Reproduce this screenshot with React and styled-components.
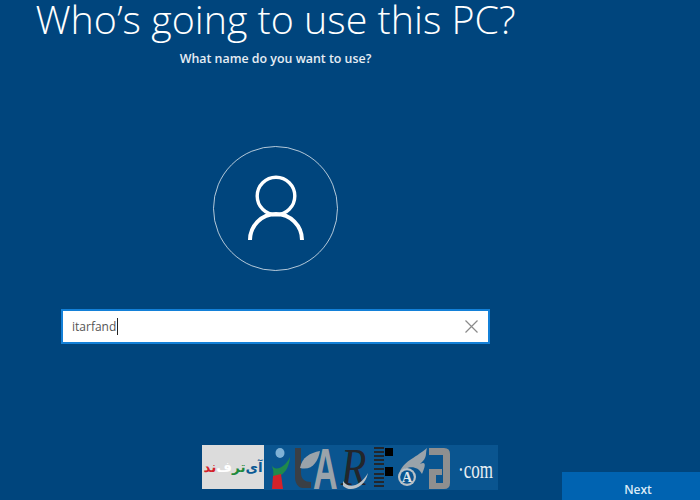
import styled, { createGlobalStyle } from 'styled-components';

const GlobalStyle = createGlobalStyle`
  html, body {
    margin: 0;
    padding: 0;
    background: #00457d;
  }
`;

const Page = styled.div`
  width: 700px;
  height: 500px;
  overflow: hidden;
  display: flex;
  flex-direction: column;
  background: #00457d;
  color: #fff;
  font-family: "Open Sans", "Noto Sans", sans-serif;
`;

const Main = styled.main`
  width: 551px;
  display: flex;
  flex-direction: column;
  align-items: center;
`;

const Title = styled.h1`
  margin: 0;
  height: 50px;
  font-size: 39.4px;
  line-height: 39px;
  font-weight: 300;
  white-space: nowrap;
  color: #fff;
`;

const Subtitle = styled.p`
  margin: 0;
  height: 18px;
  font-size: 12.4px;
  line-height: 18px;
  font-weight: 600;
  color: #e6edf4;
`;

const Avatar = styled.div`
  box-sizing: border-box;
  width: 125px;
  height: 125px;
  margin-top: 78px;
  border-radius: 50%;
  border: 1px solid rgba(255, 255, 255, 0.7);
  display: flex;
  align-items: center;
  justify-content: center;
`;

const NameField = styled.div`
  box-sizing: border-box;
  width: 429px;
  height: 35px;
  margin-top: 38px;
  padding: 0 10px 0 9px;
  display: flex;
  align-items: center;
  background: #fff;
  border: 2px solid #1380d8;
`;

const NameValue = styled.span`
  font-size: 12px;
  color: #555;
`;

const Caret = styled.span`
  width: 1px;
  height: 17px;
  margin-left: 1px;
  background: #222;
`;

const ClearIcon = styled.svg`
  margin-left: auto;
  display: block;
`;

const Footer = styled.footer`
  margin-top: auto;
  display: flex;
  align-items: flex-end;
  justify-content: space-between;
  padding-left: 202px;
`;

const Banner = styled.div`
  width: 296px;
  height: 45px;
  margin-bottom: 10px;
  display: flex;
`;

const BannerLabel = styled.div`
  width: 62px;
  height: 44px;
  display: flex;
  align-items: center;
  justify-content: center;
  background: #dcdcdc;
  direction: rtl;
  font-family: "DejaVu Sans", sans-serif;
  font-size: 13.5px;
  font-weight: 700;
  white-space: nowrap;
`;

const Tint = styled.span`
  color: ${(p) => p.$color};
`;

const BannerMarks = styled.svg`
  display: block;
  flex: 1;
`;

const NextButton = styled.button`
  width: 138px;
  height: 28px;
  padding: 8px 0 0 14px;
  border: none;
  background: #0063b1;
  color: #dcebf7;
  font-family: "Open Sans", "Noto Sans", sans-serif;
  font-size: 12px;
  font-weight: 600;
  line-height: 20px;
`;

export default function App() {
  return (
    <Page>
      <GlobalStyle />
      <Main>
        <Title>Who’s going to use this PC?</Title>
        <Subtitle>What name do you want to use?</Subtitle>
        <Avatar>
          <svg width="62" height="72" viewBox="0 0 62 72" fill="none" stroke="#fff">
            <circle cx="31" cy="23" r="18.8" strokeWidth="3.4" />
            <path d="M5 67 A26 26 0 0 1 57 67" strokeWidth="4" />
          </svg>
        </Avatar>
        <NameField>
          <NameValue>itarfand</NameValue>
          <Caret />
          <ClearIcon width="13" height="13" viewBox="0 0 13 13" stroke="#8a8a8a" strokeWidth="1.2">
            <path d="M0.5 0.5 L12.5 12.5 M12.5 0.5 L0.5 12.5" />
          </ClearIcon>
        </NameField>
      </Main>
      <Footer>
        <Banner>
          <BannerLabel>
            <Tint $color="#0b5a94">آی </Tint>
            <Tint $color="#1f8a3c">تر</Tint>
            <Tint $color="#ffffff">ف</Tint>
            <Tint $color="#d3222a">ند</Tint>
          </BannerLabel>
          <BannerMarks width="234" height="45" viewBox="0 0 234 45">
            <rect width="234" height="45" fill="#0a5590" />
            {/* person mark */}
            <ellipse cx="16" cy="8" rx="4.5" ry="5" fill="#7fb2d6" />
            <path d="M7 19 C10 27 20 24 26 12 C25 24 20 28 16 31 L9 31 C10 27 9 23 7 19 Z" fill="#1f8a4c" />
            <path d="M9 31 L17 29 L19 44 L8 44 Z" fill="#d3222a" />
            {/* leaf mark */}
            <path d="M31 3 L37 3 L37 28 C37 34 41 37 47 37 L47 43 L39 43 C34 43 31 38 31 32 Z" fill="#3a3f45" />
            <path d="M36 23 C38 12 46 8 56 6 C54 17 48 26 36 23 Z" fill="#9aa3aa" />
            <text transform="translate(49 44) scale(0.6 1)" fontFamily="Liberation Sans, sans-serif" fontSize="57" fontWeight="700" fill="#9aa3aa">A</text>
            <text transform="translate(77 40) scale(0.8 1)" fontFamily="Liberation Serif, serif" fontStyle="italic" fontSize="52" fill="#23262b">R</text>
            <path d="M79 36 C84 44 96 42 104 28 C101 43 86 48 79 41 Z" fill="#b8c0c6" />
            {/* barcode mark */}
            <path d="M110 3 H120 M110 7 H120 M110 11 H120 M110 15 H120 M110 19 H120 M110 24 H120 M110 29 H120 M110 33 H120 M110 37 H120 M110 41 H120" stroke="#23262b" strokeWidth="2" />
            <rect x="121" y="3" width="8" height="8" fill="#000" />
            <rect x="121" y="22" width="8" height="9" fill="#000" />
            {/* flame mark */}
            <path d="M135 29 C139 16 150 14 163 3 C161 9 164 12 156 19 C162 16 162 20 158 29 C153 19 141 21 135 29 Z" fill="#9aa3aa" />
            <circle cx="143" cy="32" r="9" fill="#b8c0c6" />
            <circle cx="143" cy="32" r="6.8" fill="#0a5590" />
            <text x="143" y="37" fontFamily="Liberation Serif, serif" fontWeight="700" fontSize="14" fill="#dfe5ea" textAnchor="middle">A</text>
            {/* door mark */}
            <path d="M165 3 H180 Q186 3 186 9 V38 Q186 44 180 44 H165 V24 H178 V30 H172 V38 H179 V10 H165 Z" fill="#8f8f8f" />
            <text transform="translate(194 33) scale(0.68 1)" fontFamily="Liberation Serif, serif" fontSize="25" fill="#e8eef3">·com</text>
          </BannerMarks>
        </Banner>
        <NextButton>Next</NextButton>
      </Footer>
    </Page>
  );
}
